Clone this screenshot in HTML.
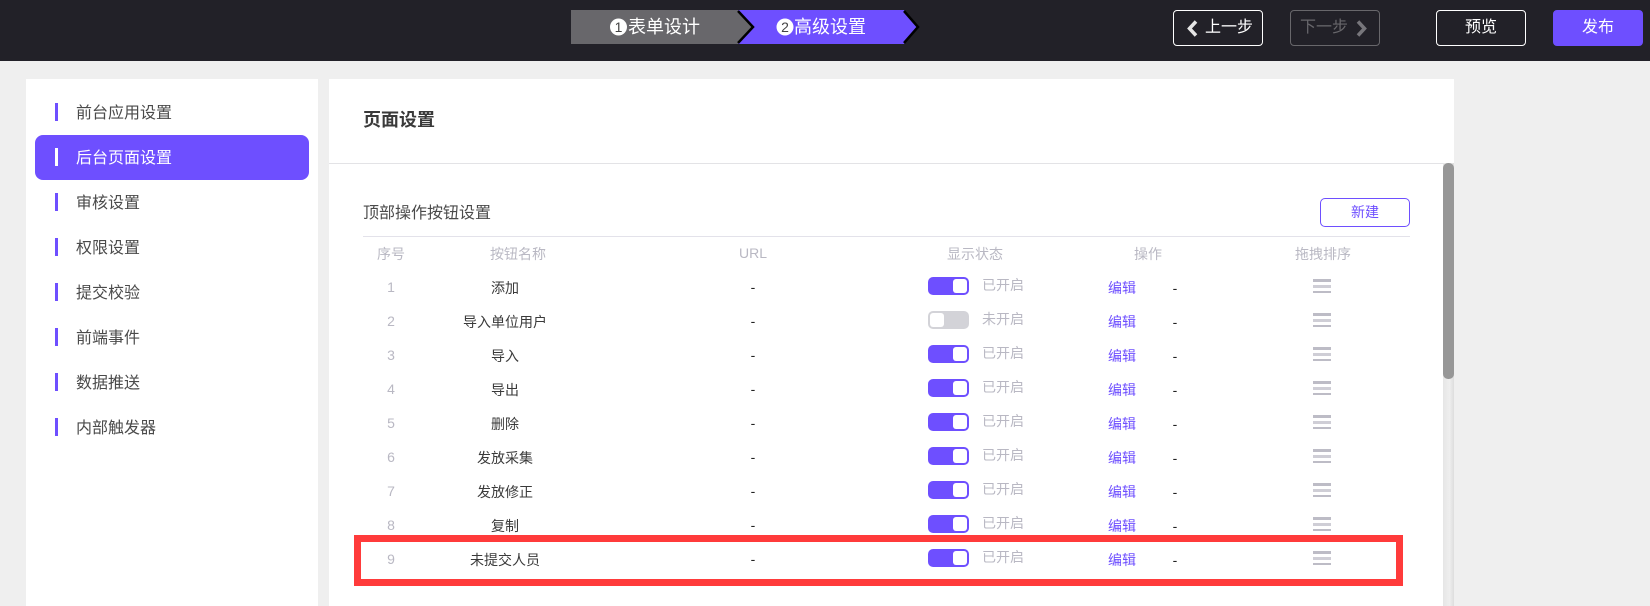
<!DOCTYPE html>
<html lang="zh">
<head>
<meta charset="utf-8">
<title>页面设置</title>
<style>
*{box-sizing:border-box;margin:0;padding:0}
html,body{width:1650px;height:606px;overflow:hidden;background:#efefef}
body{position:relative;font-family:"Liberation Sans","Noto Sans CJK SC",sans-serif;color:#333}
.a{position:absolute;white-space:nowrap}
.c{position:absolute;white-space:nowrap;transform:translateX(-50%);line-height:20px}
#top{left:0;top:0;width:1650px;height:61px;background:#222128}
.btn{position:absolute;top:10px;width:90px;height:36px;border:1px solid #fff;border-radius:4px;color:#fff;font-size:16px;line-height:34px;text-align:center}
.item{position:absolute;left:76px;font-size:16px;line-height:24px;color:#4a4a4a}
.bar{position:absolute;left:55px;width:3px;height:18px;background:#6e4fff}
.h{font-size:14px;color:#b9b8c3}
.sw{position:absolute;left:928px;width:41px;height:18px;border-radius:5px;background:#6e4fff}
.sw i{position:absolute;right:2px;top:2px;width:14px;height:14px;border-radius:3px;background:#fff}
.sw.off{background:#d3d3d8}
.sw.off i{right:auto;left:2px}
.st{position:absolute;left:982px;font-size:14px;line-height:20px;color:#b9b8c3}
.ed{position:absolute;left:1108px;font-size:14px;line-height:20px;color:#6e4fff}
.n{font-size:14px;color:#b9b8c3}
.t{font-size:14px;color:#3a3a3a}
.d{font-size:14px;color:#222;margin-top:-1px}
.ham{position:absolute;left:1313px;width:18px;height:14px}
.ham b{position:absolute;left:0;width:18px;height:3px;background:#bdbcc6}
.ham b:nth-child(2){background:#cfced6}
.ham b:nth-child(3){height:2px}
</style>
</head>
<body>
<div class="a" id="top"></div>

<!-- steps -->
<svg class="a" style="left:565px;top:5px" width="365" height="45" viewBox="565 5 365 45">
<polygon points="571,10 738,10 754,27 738,44 571,44" fill="#68676b"/>
<polygon points="738,10 904,10 917,27 904,44 738,44 754,27" fill="#6e4fff"/>
<polyline points="738,11 753,27 738,43" fill="none" stroke="#000" stroke-width="2.5"/>
<polyline points="904,11 918,27 904,43" fill="none" stroke="#000" stroke-width="2.5"/>
<circle cx="618.5" cy="27" r="8.5" fill="#fff"/>
<circle cx="785" cy="27" r="8.5" fill="#fff"/>
<text x="618.5" y="32" font-size="14" text-anchor="middle" fill="#444" font-family="Liberation Sans">1</text>
<text x="785" y="32" font-size="14" text-anchor="middle" fill="#444" font-family="Liberation Sans">2</text>
<text x="628" y="33" font-size="18" fill="#fff" font-family="Liberation Sans,Noto Sans CJK SC,sans-serif">表单设计</text>
<text x="794" y="33" font-size="18" fill="#fff" font-family="Liberation Sans,Noto Sans CJK SC,sans-serif">高级设置</text>
</svg>

<!-- action buttons -->
<div class="btn" style="left:1173px;padding-left:22px">上一步</div>
<svg class="a" style="left:1186px;top:20px" width="12" height="17"><polyline points="10,1.5 3.5,8.5 10,15.5" fill="none" stroke="#e6e6e6" stroke-width="3.5"/></svg>
<div class="btn" style="left:1290px;border-color:#68676b;color:#68676b;padding-right:22px">下一步</div>
<svg class="a" style="left:1356px;top:20px" width="12" height="17"><polyline points="2,1.5 8.5,8.5 2,15.5" fill="none" stroke="#77767b" stroke-width="3.5"/></svg>
<div class="btn" style="left:1436px">预览</div>
<div class="btn" style="left:1553px;background:#6e4fff;border-color:#6e4fff">发布</div>

<!-- sidebar -->
<div class="a" style="left:26px;top:79px;width:292px;height:527px;background:#fff"></div>
<div class="a" style="left:35px;top:135px;width:274px;height:45px;background:#6e4fff;border-radius:8px"></div>
<div class="bar" style="top:103px"></div><div class="item" style="top:102px">前台应用设置</div>
<div class="bar" style="top:148px;background:#fff"></div><div class="item" style="top:147px;color:#fff">后台页面设置</div>
<div class="bar" style="top:193px"></div><div class="item" style="top:192px">审核设置</div>
<div class="bar" style="top:238px"></div><div class="item" style="top:237px">权限设置</div>
<div class="bar" style="top:283px"></div><div class="item" style="top:282px">提交校验</div>
<div class="bar" style="top:328px"></div><div class="item" style="top:327px">前端事件</div>
<div class="bar" style="top:373px"></div><div class="item" style="top:372px">数据推送</div>
<div class="bar" style="top:418px"></div><div class="item" style="top:417px">内部触发器</div>

<!-- main panel -->
<div class="a" style="left:329px;top:79px;width:1125px;height:527px;background:#fff"></div>
<div class="a" style="left:329px;top:163px;width:1114px;height:1px;background:#e3e3e6"></div>
<div class="a" style="left:363px;top:107px;font-size:18px;font-weight:700;line-height:26px;color:#3a3a3a">页面设置</div>
<div class="a" style="left:363px;top:202px;font-size:16px;line-height:24px;color:#4a4a4a">顶部操作按钮设置</div>
<div class="a" style="left:1320px;top:198px;width:90px;height:29px;border:1px solid #6e4fff;border-radius:5px;color:#6e4fff;font-size:14px;line-height:27px;text-align:center">新建</div>
<div class="a" style="left:363px;top:236px;width:1047px;height:1px;background:#e3e2ea"></div>

<!-- scrollbar -->
<div class="a" style="left:1443px;top:163px;width:11px;height:443px;background:linear-gradient(90deg,#e6e6e6,#eeeeee 60%,#dddddd)"></div>
<div class="a" style="left:1443px;top:163px;width:11px;height:216px;background:#979797;border-radius:5px"></div>

<!-- header -->
<div class="c h" style="left:391px;top:244px">序号</div>
<div class="c h" style="left:518px;top:244px">按钮名称</div>
<div class="c h" style="left:753px;top:243px">URL</div>
<div class="c h" style="left:975px;top:244px">显示状态</div>
<div class="c h" style="left:1148px;top:244px">操作</div>
<div class="c h" style="left:1323px;top:244px">拖拽排序</div>

<!-- row 1 -->
<div class="c n" style="left:391px;top:277px">1</div><div class="c t" style="left:505px;top:278px">添加</div><div class="c d" style="left:753px;top:278px">-</div>
<div class="sw" style="top:277px"><i></i></div><div class="st" style="top:275px">已开启</div><div class="ed" style="top:278px">编辑</div><div class="c d" style="left:1175px;top:279px">-</div>
<div class="ham" style="top:279px"><b style="top:0"></b><b style="top:6px"></b><b style="top:12px"></b></div>
<!-- row 2 -->
<div class="c n" style="left:391px;top:311px">2</div><div class="c t" style="left:505px;top:312px">导入单位用户</div><div class="c d" style="left:753px;top:312px">-</div>
<div class="sw off" style="top:311px"><i></i></div><div class="st" style="top:309px">未开启</div><div class="ed" style="top:312px">编辑</div><div class="c d" style="left:1175px;top:313px">-</div>
<div class="ham" style="top:313px"><b style="top:0"></b><b style="top:6px"></b><b style="top:12px"></b></div>
<!-- row 3 -->
<div class="c n" style="left:391px;top:345px">3</div><div class="c t" style="left:505px;top:346px">导入</div><div class="c d" style="left:753px;top:346px">-</div>
<div class="sw" style="top:345px"><i></i></div><div class="st" style="top:343px">已开启</div><div class="ed" style="top:346px">编辑</div><div class="c d" style="left:1175px;top:347px">-</div>
<div class="ham" style="top:347px"><b style="top:0"></b><b style="top:6px"></b><b style="top:12px"></b></div>
<!-- row 4 -->
<div class="c n" style="left:391px;top:379px">4</div><div class="c t" style="left:505px;top:380px">导出</div><div class="c d" style="left:753px;top:380px">-</div>
<div class="sw" style="top:379px"><i></i></div><div class="st" style="top:377px">已开启</div><div class="ed" style="top:380px">编辑</div><div class="c d" style="left:1175px;top:381px">-</div>
<div class="ham" style="top:381px"><b style="top:0"></b><b style="top:6px"></b><b style="top:12px"></b></div>
<!-- row 5 -->
<div class="c n" style="left:391px;top:413px">5</div><div class="c t" style="left:505px;top:414px">删除</div><div class="c d" style="left:753px;top:414px">-</div>
<div class="sw" style="top:413px"><i></i></div><div class="st" style="top:411px">已开启</div><div class="ed" style="top:414px">编辑</div><div class="c d" style="left:1175px;top:415px">-</div>
<div class="ham" style="top:415px"><b style="top:0"></b><b style="top:6px"></b><b style="top:12px"></b></div>
<!-- row 6 -->
<div class="c n" style="left:391px;top:447px">6</div><div class="c t" style="left:505px;top:448px">发放采集</div><div class="c d" style="left:753px;top:448px">-</div>
<div class="sw" style="top:447px"><i></i></div><div class="st" style="top:445px">已开启</div><div class="ed" style="top:448px">编辑</div><div class="c d" style="left:1175px;top:449px">-</div>
<div class="ham" style="top:449px"><b style="top:0"></b><b style="top:6px"></b><b style="top:12px"></b></div>
<!-- row 7 -->
<div class="c n" style="left:391px;top:481px">7</div><div class="c t" style="left:505px;top:482px">发放修正</div><div class="c d" style="left:753px;top:482px">-</div>
<div class="sw" style="top:481px"><i></i></div><div class="st" style="top:479px">已开启</div><div class="ed" style="top:482px">编辑</div><div class="c d" style="left:1175px;top:483px">-</div>
<div class="ham" style="top:483px"><b style="top:0"></b><b style="top:6px"></b><b style="top:12px"></b></div>
<!-- row 8 -->
<div class="c n" style="left:391px;top:515px">8</div><div class="c t" style="left:505px;top:516px">复制</div><div class="c d" style="left:753px;top:516px">-</div>
<div class="sw" style="top:515px"><i></i></div><div class="st" style="top:513px">已开启</div><div class="ed" style="top:516px">编辑</div><div class="c d" style="left:1175px;top:517px">-</div>
<div class="ham" style="top:517px"><b style="top:0"></b><b style="top:6px"></b><b style="top:12px"></b></div>
<!-- row 9 -->
<div class="c n" style="left:391px;top:549px">9</div><div class="c t" style="left:505px;top:550px">未提交人员</div><div class="c d" style="left:753px;top:550px">-</div>
<div class="sw" style="top:549px"><i></i></div><div class="st" style="top:547px">已开启</div><div class="ed" style="top:550px">编辑</div><div class="c d" style="left:1175px;top:551px">-</div>
<div class="ham" style="top:551px"><b style="top:0"></b><b style="top:6px"></b><b style="top:12px"></b></div>

<!-- red highlight -->
<div class="a" style="left:354px;top:535px;width:1049px;height:51px;border:7px solid #ff3b3b"></div>
</body>
</html>
